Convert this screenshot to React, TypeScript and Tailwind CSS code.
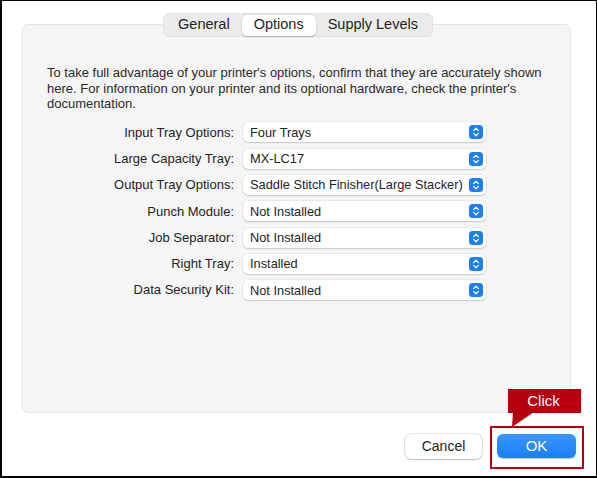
import React from "react";

const rows = [
  { label: "Input Tray Options:", value: "Four Trays" },
  { label: "Large Capacity Tray:", value: "MX-LC17" },
  { label: "Output Tray Options:", value: "Saddle Stitch Finisher(Large Stacker)" },
  { label: "Punch Module:", value: "Not Installed" },
  { label: "Job Separator:", value: "Not Installed" },
  { label: "Right Tray:", value: "Installed" },
  { label: "Data Security Kit:", value: "Not Installed" },
];

function Stepper() {
  return (
    <svg width="14" height="14" viewBox="0 0 14 14">
      <rect x="0" y="0" width="14" height="14" rx="3.5" fill="#1c7ff5" />
      <path d="M4.6 5.6 L7 3.3 L9.4 5.6" fill="none" stroke="#fff" strokeWidth="1.3" strokeLinecap="round" strokeLinejoin="round" />
      <path d="M4.6 8.4 L7 10.7 L9.4 8.4" fill="none" stroke="#fff" strokeWidth="1.3" strokeLinecap="round" strokeLinejoin="round" />
    </svg>
  );
}

export default function App() {
  return (
    <div
      className="relative w-[597px] h-[478px] bg-white border-black border-t border-r border-l-2 border-b-2 overflow-hidden text-[#242424]"
      style={{ fontFamily: '"Liberation Sans", Arial, sans-serif' }}
    >
      {/* Tabs + panel */}
      <div className="ml-[20px] mr-[25px] mt-[12px]">
        <div className="relative z-10 flex justify-center pl-[3px] -mb-[13px]">
          <div className="flex items-center h-[24px] px-[2px] rounded-[6px] bg-[#ebebeb] border border-[#e2e2e2] text-[14.5px]">
            <div className="px-[12px] h-[20px] flex items-center">General</div>
            <div className="px-[12px] h-[21px] flex items-center bg-white rounded-[5px] shadow-[0_0.5px_1.5px_rgba(0,0,0,0.25)]">Options</div>
            <div className="px-[12px] h-[20px] flex items-center">Supply Levels</div>
          </div>
        </div>

        {/* Panel */}
        <div className="h-[389px] rounded-[6px] bg-[#f5f5f5] border border-[#e6e6e6] pt-[40px] px-[24px]">
          <p className="text-[13px] leading-[15.7px] text-[#2a2a2a]">
            To take full advantage of your printer's options, confirm that they are accurately shown
            here. For information on your printer and its optional hardware, check the printer's
            documentation.
          </p>

          <div className="mt-[7px] flex flex-col">
            {rows.map((r) => (
              <div key={r.label} className="h-[26.33px] flex items-center">
                <div className="w-[188px] text-right text-[13px] pr-[1px]">{r.label}</div>
                <div className="ml-[8px] w-[243px] h-[20px] flex items-center justify-between bg-white rounded-[5px] shadow-[0_0_0_0.5px_rgba(0,0,0,0.08),0_1px_1.5px_rgba(0,0,0,0.15)] pl-[7px] pr-[3px]">
                  <span className="text-[12.8px] whitespace-nowrap">{r.value}</span>
                  <Stepper />
                </div>
              </div>
            ))}
          </div>
        </div>
      </div>

      {/* Buttons */}
      <div className="flex justify-end gap-[15px] mt-[21px] mr-[20px]">
        <button className="w-[77px] h-[25px] rounded-[6px] bg-white text-[14px] text-[#222] shadow-[0_0_0_0.5px_rgba(0,0,0,0.18),0_1px_1.5px_rgba(0,0,0,0.2)]">
          Cancel
        </button>
        <button className="w-[79px] h-[24px] rounded-[6px] bg-gradient-to-b from-[#3b96fb] to-[#167ef7] text-white text-[15px] shadow-[0_0.5px_1px_rgba(0,0,0,0.25)]">
          OK
        </button>
      </div>

      {/* Callout overlay */}
      <div className="absolute left-[488px] top-[425px] w-[94px] h-[43px] border-[2.5px] border-[#b5000e]" />
      <div className="absolute left-[506px] top-[388px] w-[73px] h-[24px] bg-[#b5000e] text-white text-[15px] flex items-center justify-center pr-[2px]">
        Click
      </div>
      <svg className="absolute left-[506px] top-[411px]" width="30" height="16" viewBox="0 0 30 16">
        <polygon points="5,0 26,0 4,15" fill="#b5000e" />
      </svg>
    </div>
  );
}
